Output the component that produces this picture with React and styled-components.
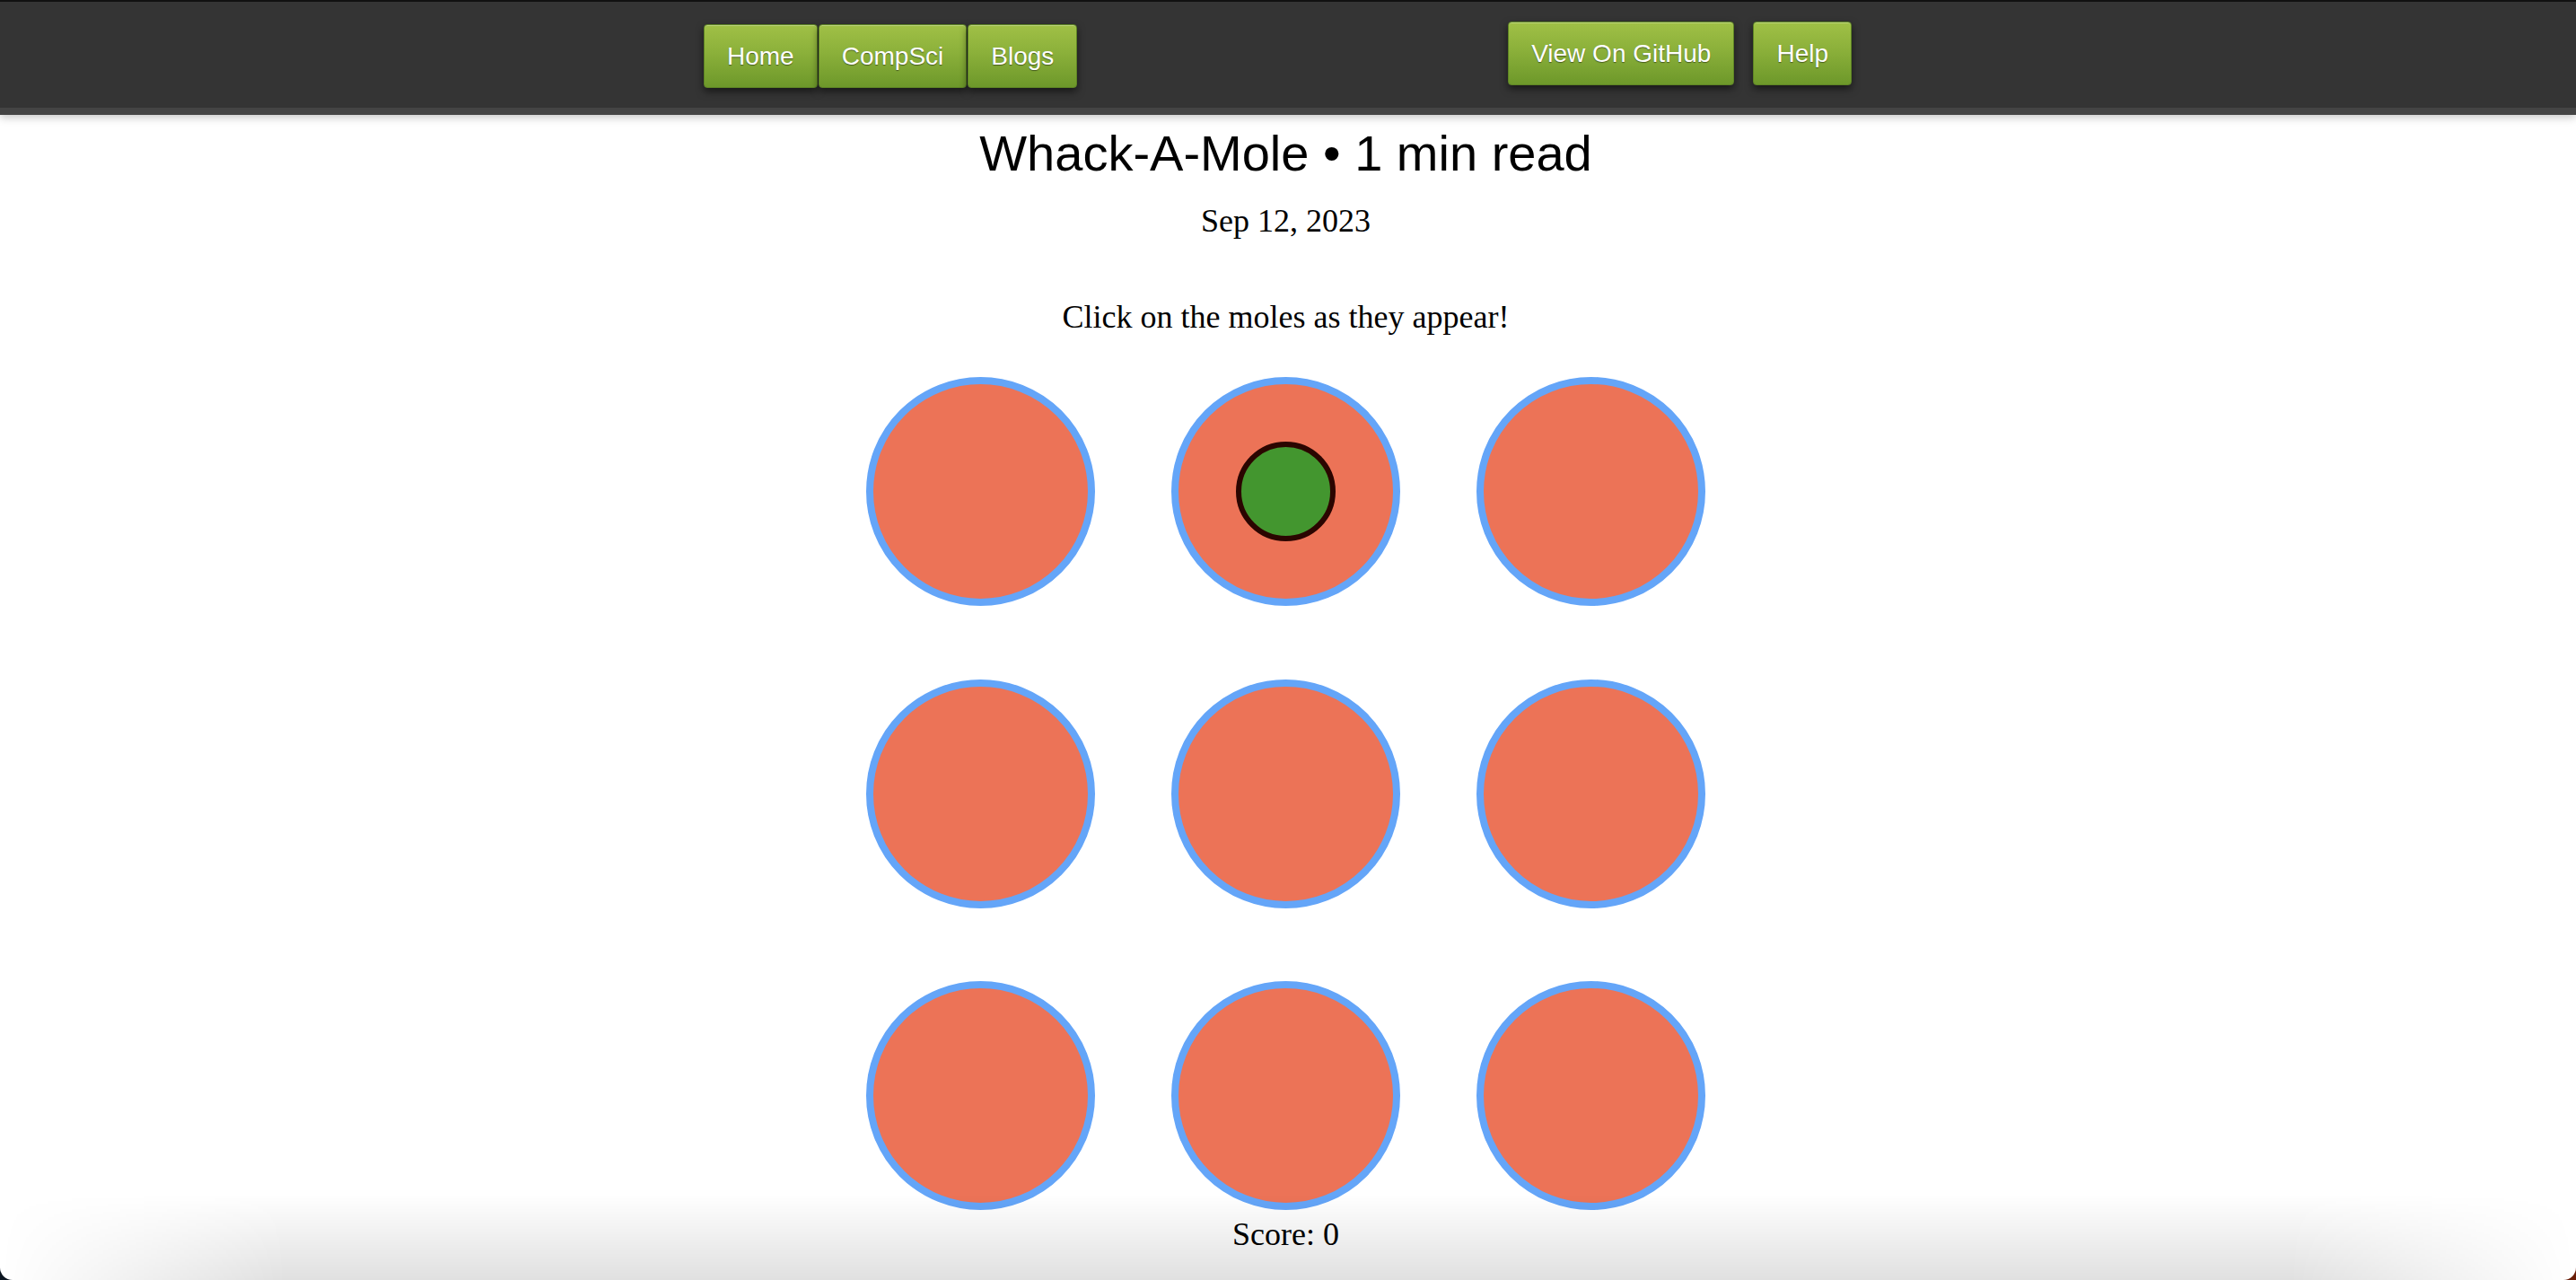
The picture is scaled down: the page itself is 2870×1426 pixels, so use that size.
import React from "react";
import styled, { createGlobalStyle } from "styled-components";

const GlobalStyle = createGlobalStyle`
  html, body {
    margin: 0;
    padding: 0;
    background: linear-gradient(to right, #0b1520, #3a1a10 60%, #6a1d08);
  }
  body {
    font-family: "Liberation Serif", "Times New Roman", serif;
    color: #000;
  }
`;

const HOLES = [false, true, false, false, false, false, false, false, false];

const App = () => {
  return (
    <Page>
      <GlobalStyle />
      <Header>
        <HeaderInner>
          <NavGroup $top={25}>
            <NavButton>Home</NavButton>
            <NavButton>CompSci</NavButton>
            <NavButton>Blogs</NavButton>
          </NavGroup>
          <NavGroup $top={22} $gap={21} $right>
            <NavButton>View On GitHub</NavButton>
            <NavButton>Help</NavButton>
          </NavGroup>
        </HeaderInner>
      </Header>

      <Main>
        <Title>Whack-A-Mole • 1 min read</Title>
        <PostDate>Sep 12, 2023</PostDate>
        <Intro>Click on the moles as they appear!</Intro>
        <Board>
          {HOLES.map((up, i) => (
            <Hole key={i}>{up && <Mole />}</Hole>
          ))}
        </Board>
        <Score>Score: 0</Score>
      </Main>

      <BottomFade />
    </Page>
  );
};

const Page = styled.div`
  position: relative;
  min-height: 100vh;
  background: #fff;
  border-radius: 0 0 14px 14px;
  overflow: hidden;
`;

const Header = styled.header`
  position: relative;
  z-index: 1;
  height: 118px;
  background: #343434;
  border-top: 2px solid #111;
  border-bottom: 8px solid #444;
  box-shadow: 0 3px 9px rgba(0, 0, 0, 0.22);
`;

const HeaderInner = styled.nav`
  width: 1302px;
  margin: 0 auto;
  display: flex;
  justify-content: space-between;
  align-items: flex-start;
`;

const NavGroup = styled.div`
  display: flex;
  gap: ${(p) => p.$gap || 1}px;
  margin-top: ${(p) => p.$top}px;
  margin-right: ${(p) => (p.$right ? 23 : 0)}px;
`;

const NavButton = styled.a`
  display: flex;
  align-items: center;
  height: 71px;
  padding: 0 25px;
  box-sizing: border-box;
  border: 1px solid #5e8524;
  border-radius: 4px;
  background: linear-gradient(to bottom, #a0c046 0%, #8bb03a 45%, #6d982a 100%);
  box-shadow: inset 0 1px 0 rgba(255, 255, 255, 0.3), 0 4px 9px rgba(0, 0, 0, 0.55);
  font-family: "Liberation Sans", Arial, sans-serif;
  font-size: 28px;
  color: #fff;
  text-shadow: 0 1px 1px rgba(0, 0, 0, 0.45);
  cursor: pointer;
`;

const Main = styled.main`
  display: flex;
  flex-direction: column;
  align-items: center;
  padding-right: 5px;
`;

const Title = styled.h1`
  margin: 11px 0 0;
  font-family: "Liberation Sans", Arial, sans-serif;
  font-weight: 400;
  font-size: 56px;
  line-height: 64px;
`;

const PostDate = styled.p`
  margin: 23px 0 0;
  font-size: 36px;
  line-height: 40px;
`;

const Intro = styled.p`
  margin: 67px 0 0;
  font-size: 36px;
  line-height: 40px;
`;

const Board = styled.div`
  margin-top: 47px;
  display: grid;
  grid-template-columns: repeat(3, 255px);
  column-gap: 85px;
  row-gap: 81.5px;
`;

const Hole = styled.div`
  width: 255px;
  height: 255px;
  box-sizing: border-box;
  border: 8px solid #64a5f8;
  border-radius: 50%;
  background: #ec7357;
  display: flex;
  align-items: center;
  justify-content: center;
`;

const Mole = styled.div`
  width: 111px;
  height: 111px;
  box-sizing: border-box;
  border: 6px solid #2b0500;
  border-radius: 50%;
  background: #43962f;
`;

const Score = styled.p`
  margin: 7px 0 0;
  font-size: 36px;
  line-height: 40px;
`;

const BottomFade = styled.div`
  position: absolute;
  left: 0;
  right: 0;
  bottom: 0;
  height: 96px;
  pointer-events: none;
  background: linear-gradient(to bottom, rgba(0, 0, 0, 0), rgba(0, 0, 0, 0.12));
  -webkit-mask-image: linear-gradient(to right, transparent 0, #000 320px, #000 calc(100% - 320px), transparent 100%);
  mask-image: linear-gradient(to right, transparent 0, #000 320px, #000 calc(100% - 320px), transparent 100%);
`;

export default App;
